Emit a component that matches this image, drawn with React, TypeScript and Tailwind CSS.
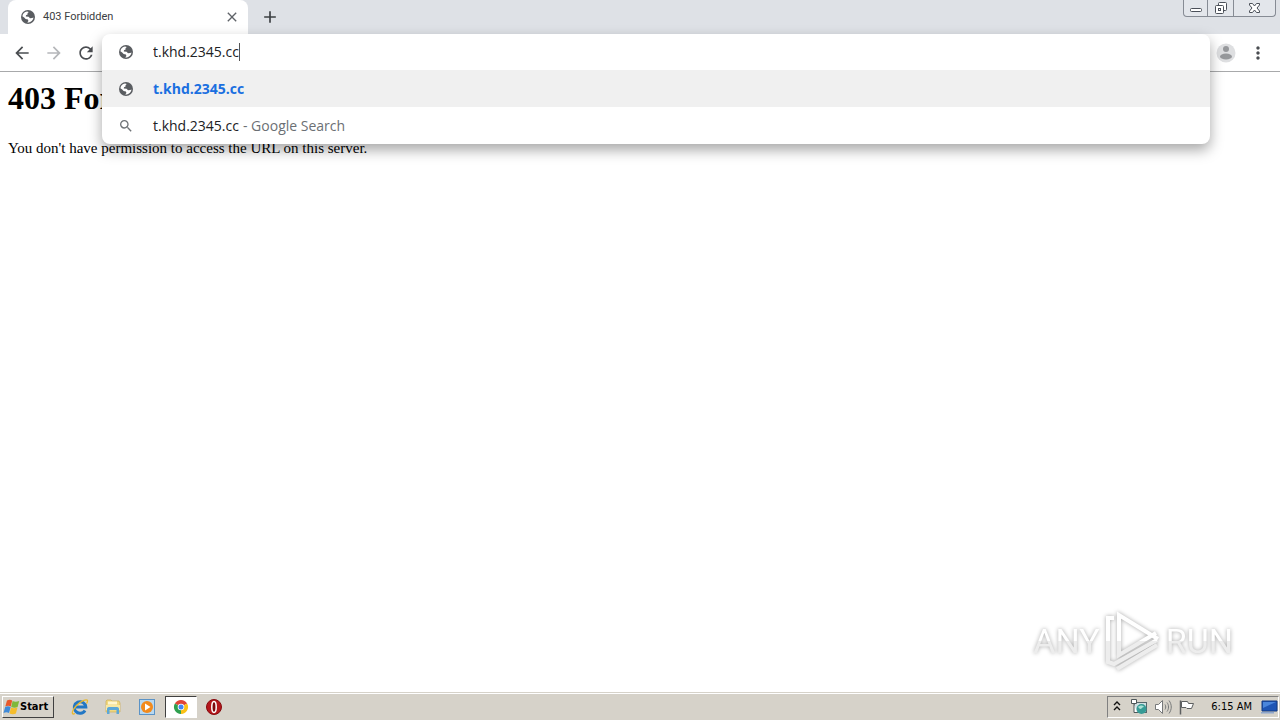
import { useState } from "react";
import { MdArrowBack, MdArrowForward, MdRefresh, MdSearch, MdMoreVert, MdClose, MdAdd } from "react-icons/md";

const uiFont = "font-['Open_Sans','Noto_Sans',sans-serif]";

function GlobeIcon() {
  return (
    <svg width="16" height="16" viewBox="0 0 16 16" className="shrink-0">
      <circle cx="8" cy="8" r="7" fill="#5a5d61" />
      <path
        d="M2.400 7.200C2.600 4.800 4.600 2.700 7 2.400L8.800 3 7.400 4.300 7.800 5.300 6 6.300 5.800 7.500 8.600 7.700 10 9.200 12.200 8.900 13.500 8.500C13.200 11 11.300 13 8.900 13.500L7.200 13.400 8.400 11.900 7.900 10.400 5.600 9.900 4.200 8.400z"
        fill="#fff"
      />
    </svg>
  );
}

function WindowControls() {
  return (
    <div className="mr-1 ml-auto flex h-[17px] self-start rounded-b-[4px] border border-t-0 border-[#868b94] bg-[#e3e6eb]">
      <button aria-label="Minimize" className="flex w-6 items-center justify-center border-r border-[#868b94]">
        <svg width="14" height="17" viewBox="0 0 14 17" fill="#fff" stroke="#4b5059">
          <rect x="1.500" y="8.500" width="11" height="3" rx="1" />
        </svg>
      </button>
      <button aria-label="Restore" className="flex w-[26px] items-center justify-center border-r border-[#868b94]">
        <svg width="14" height="16" viewBox="0 0 14 16" fill="#fff" stroke="#4b5059">
          <rect x="4.500" y="2.500" width="8" height="8" rx="1" />
          <rect x="1.500" y="5.500" width="8" height="8" rx="1" />
          <rect x="4.500" y="8.500" width="2" height="2" />
        </svg>
      </button>
      <button aria-label="Close window" className="flex w-[41px] items-center justify-center">
        <svg width="13" height="16" viewBox="0 0 13 16" fill="#fff" stroke="#4b5059">
          <path d="M1.500 3.500h3l2 2.500 2-2.500h3v1.500l-2.500 3 2.500 3v1.500h-3l-2-2.500-2 2.500h-3v-1.500l2.500-3-2.500-3z" />
        </svg>
      </button>
    </div>
  );
}

function TabStrip() {
  return (
    <div className="flex h-[34px] shrink-0 items-center bg-[#dee1e6] pl-2">
      <div className="flex h-full w-60 items-center rounded-t-lg bg-white pr-2 pl-3">
        <GlobeIcon />
        <span className="ml-[7px] flex-1 font-[Roboto,sans-serif] text-[11px] leading-4 text-[#3c4043]">403 Forbidden</span>
        <button aria-label="Close tab">
          <MdClose className="size-4 stroke-[#5f6368] text-[#5f6368]" />
        </button>
      </div>
      <button aria-label="New tab" className="ml-3">
        <MdAdd className="size-5 stroke-[#3c4043] text-[#3c4043]" />
      </button>
      <WindowControls />
    </div>
  );
}

function Omnibox() {
  const [query, setQuery] = useState("t.khd.2345.cc");

  return (
    <div className="absolute inset-x-0 top-0 z-10 rounded-lg bg-white text-sm leading-5 text-[#202124] shadow-[0_6px_14px_rgba(0,0,0,0.35)]">
      <div className="flex h-9 items-center px-4">
        <GlobeIcon />
        <input
          aria-label="Address and search bar"
          value={query}
          onChange={(e) => setQuery(e.target.value)}
          className="ml-[19px] [field-sizing:content] outline-none"
        />
        <span className="h-[18px] w-px bg-[#555]" />
      </div>
      <a href="#open" className="flex h-[37px] items-center gap-[19px] bg-[#f0f0f0] px-4 font-bold text-[#1a6fe0]">
        <GlobeIcon />
        {query}
      </a>
      <a href="#search" className="flex h-[37px] items-center px-4">
        <MdSearch className="mr-[19px] size-4 text-[#6f7377]" />
        {query}
        <span className="ml-1 text-[#6b6f74]">- Google Search</span>
      </a>
    </div>
  );
}

function Toolbar() {
  return (
    <div className="flex h-[38px] shrink-0 items-center border-b border-[#a8a9ab] bg-white pl-3">
      <button aria-label="Back"><MdArrowBack className="size-5 text-[#4a4d51]" /></button>
      <button aria-label="Forward" className="ml-3"><MdArrowForward className="size-5 text-[#b5b7ba]" /></button>
      <button aria-label="Reload" className="ml-3"><MdRefresh className="size-5 text-[#4a4d51]" /></button>
      <div className="relative ml-1.5 flex-1 self-stretch">
        <Omnibox />
      </div>
      <button aria-label="Profile" className="ml-1.5">
        <svg width="20" height="20" viewBox="0 0 20 20">
          <circle cx="10" cy="10" r="9.500" fill="#dedfe1" />
          <circle cx="10" cy="6" r="3" fill="#96989b" />
          <ellipse cx="10" cy="13.500" rx="6" ry="3" fill="#96989b" />
        </svg>
      </button>
      <button aria-label="Menu" className="mr-3 ml-3"><MdMoreVert className="size-5 text-[#4a4d51]" /></button>
    </div>
  );
}

function Watermark() {
  const word = "bg-linear-to-b from-white from-50% to-[#ededed] to-50% bg-clip-text text-transparent";
  return (
    <div className="mt-auto mr-[47px] mb-5 flex items-center gap-1 self-end font-[Roboto,sans-serif] text-[34px] leading-[62px] drop-shadow-[0_0_2px_rgba(0,0,0,0.35)]">
      <span className={word}>ANY</span>
      <svg width="58" height="62" viewBox="0 0 58 62" fill="none" strokeWidth="4">
        <defs>
          <linearGradient id="mark" gradientUnits="userSpaceOnUse" x1="0" y1="0" x2="0" y2="62">
            <stop offset="0.5" stopColor="#fff" />
            <stop offset="0.5" stopColor="#ededed" />
          </linearGradient>
        </defs>
        <g stroke="url(#mark)">
          <path d="M10 8H4v44l6 2 43-24" />
          <path d="M54 29L15 5v40l37-22" />
          <path d="M13 59l40-24" />
        </g>
      </svg>
      <span className={word}>RUN</span>
    </div>
  );
}

function StartFlag() {
  return (
    <svg width="17" height="16" viewBox="0 0 17 16">
      <path d="M4 1.500c2-1 3.500-1 5.200 0L7.800 7.400c-1.800-1-3.300-1-5.500 0z" fill="#e8582b" />
      <path d="M9.600 2c2 1 4 1 6.600 0l-1.600 6c-2 1-4 1-6.400 0z" fill="#7fb83a" />
      <path d="M2.200 8c2-1 3.500-1 5.500 0L6 14c-1.700-1-3.500-1-5.500 0z" fill="#3f8ad8" />
      <path d="M8 8.500c2 1 4 1 6.500 0l-1.600 6c-2 1-4 1-6.400 0z" fill="#f5bd2c" />
    </svg>
  );
}

function ExplorerIcon() {
  return (
    <svg width="18" height="18" viewBox="0 0 18 18" fill="none">
      <path d="M14 12.500a5.800 5.800 0 1 1 .8-3.500H5" stroke="#2277c4" strokeWidth="3" />
      <path d="M4 15.500C0 17.500.5 13 5 8S16 .5 16.500 2.500c.2 1-.2 2-1 3" stroke="#e8b92f" strokeWidth="1.300" />
    </svg>
  );
}

function FolderIcon() {
  return (
    <svg width="18" height="18" viewBox="0 0 18 18">
      <path d="M2 3l1-1h4l1 1h7l1 2v9H2z" fill="#f0d880" stroke="#cdb058" strokeWidth="0.700" />
      <path d="M4 3.500h9v3H4z" fill="#fff6cf" />
      <path d="M2 7h14v5H2z" fill="#f7e8a4" />
      <path d="M3 16v-5c0-1 .5-2 2-2h8c1.500 0 2 1 2 2v5h-2.500v-4h-7v4z" fill="#5ba7d8" />
    </svg>
  );
}

function MediaIcon() {
  return (
    <svg width="18" height="18" viewBox="0 0 18 18">
      <rect x="1.500" y="1.500" width="15" height="15" fill="#b8d8f0" stroke="#5b93c6" />
      <circle cx="9" cy="9" r="6" fill="#f28a1c" />
      <path d="M7 5.500l5.500 3.500L7 12.500z" fill="#fff" />
    </svg>
  );
}

function ChromeIcon() {
  return (
    <svg width="16" height="16" viewBox="0 0 16 16">
      <path d="M8 8L1.900 4.500A7 7 0 0 1 14.100 4.500z" fill="#e04437" />
      <path d="M8 8l6.100-3.500A7 7 0 0 1 8 15z" fill="#fbc116" />
      <path d="M8 8v7A7 7 0 0 1 1.900 4.500z" fill="#2fa04f" />
      <circle cx="8" cy="8" r="3.300" fill="#fff" />
      <circle cx="8" cy="8" r="2.500" fill="#4285f4" />
    </svg>
  );
}

function OperaIcon() {
  return (
    <svg width="18" height="18" viewBox="0 0 18 18">
      <circle cx="9" cy="9" r="7.500" fill="#b5161b" stroke="#85090d" />
      <ellipse cx="9" cy="9" rx="2.200" ry="5.500" fill="#7d080c" stroke="#fff" strokeWidth="1.500" />
    </svg>
  );
}

function Tray() {
  return (
    <div className="ml-auto flex h-[22px] items-center border border-[#808080] border-r-white border-b-white pl-1">
      <button aria-label="Show hidden icons">
        <svg width="10" height="12" viewBox="0 0 10 12" fill="none" stroke="#111" strokeWidth="1.400">
          <path d="M2 4l3-3 3 3M2 9l3-3 3 3" />
        </svg>
      </button>
      <button aria-label="Network" className="ml-2">
        <svg width="18" height="18" viewBox="0 0 18 18">
          <rect x="4.500" y="4.500" width="12" height="10" fill="#cfe0e2" stroke="#55666b" />
          <circle cx="11.500" cy="11" r="5" fill="#369b95" />
          <path d="M8 9c2-2 5-2 6 0-2 0-2 2-4 2z" fill="#a8dfd3" />
          <path d="M1.500 1.500h5v4h-5zM4 5.500v9h3" fill="#fff" stroke="#4e5759" />
        </svg>
      </button>
      <button aria-label="Volume" className="ml-1.5">
        <svg width="18" height="18" viewBox="0 0 18 18" fill="none" stroke="#77797a">
          <path d="M1.500 6.500h3l4-4v13l-4-4h-3z" fill="#fff" />
          <path d="M11 6.500c1 1.500 1 3.500 0 5M13 4.500c2 2.500 2 6.500 0 9M15 2.500c3 4 3 9 0 13" />
        </svg>
      </button>
      <button aria-label="Action center" className="ml-1.5">
        <svg width="18" height="18" viewBox="0 0 18 18" fill="#fff" stroke="#5d5f60">
          <path d="M2.500 2.500v14" strokeWidth="1.500" />
          <path d="M3.500 3.500h6l1 2h5l-2 5H9l-1-1H3.500z" />
        </svg>
      </button>
      <time className="ml-[15px] leading-4">6:15 AM</time>
      <button aria-label="Show desktop" className="ml-2">
        <svg width="18" height="16" viewBox="0 0 18 16">
          <path d="M2 2h15v10H2z" fill="#1e55b5" stroke="#123b82" />
          <path d="M3 3h13L3 9z" fill="#4a86dc" />
          <path d="M1 13h13v1.500H1z" fill="#8ea6cc" />
        </svg>
      </button>
    </div>
  );
}

function Taskbar() {
  return (
    <div className="shrink-0 border-t border-[#d6d2c9] bg-[#d6d2c9] font-['DejaVu_Sans_Condensed','DejaVu_Sans',sans-serif] text-[11px] text-black">
      <div className="flex h-[27px] items-center border-t border-white pr-px pl-0.5">
        <button className="flex h-[22px] w-[52px] items-center border border-white border-r-[#404040] border-b-[#404040] font-bold">
          <StartFlag />
          Start
        </button>
        <button aria-label="Internet Explorer" className="ml-[17px]"><ExplorerIcon /></button>
        <button aria-label="Windows Explorer" className="ml-[15px]"><FolderIcon /></button>
        <button aria-label="Media Player" className="ml-4"><MediaIcon /></button>
        <button
          aria-label="Google Chrome"
          className="ml-[9px] flex h-[22px] w-8 items-center justify-center border border-[#404040] border-r-white border-b-white bg-white"
        >
          <ChromeIcon />
        </button>
        <button aria-label="Opera" className="ml-2"><OperaIcon /></button>
        <Tray />
      </div>
    </div>
  );
}

export default function App() {
  return (
    <div className={`flex h-screen flex-col bg-white ${uiFont}`}>
      <TabStrip />
      <Toolbar />
      <main className="flex flex-1 flex-col pl-2 font-['Liberation_Serif',serif] text-black">
        <h1 className="mt-2 text-[32px] leading-9 font-bold">403 Forbidden</h1>
        <p className="mt-[22px] text-[15px] leading-5">You don't have permission to access the URL on this server.</p>
        <Watermark />
      </main>
      <Taskbar />
    </div>
  );
}
